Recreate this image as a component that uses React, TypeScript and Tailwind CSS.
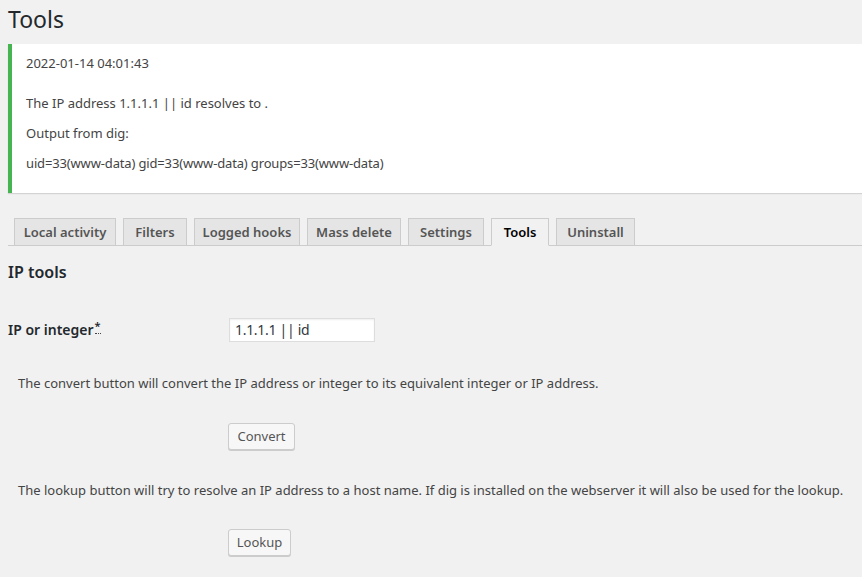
import React from "react";

const tabs: { label: string; w: string; active?: boolean }[] = [
  { label: "Local activity", w: "w-[102px]" },
  { label: "Filters", w: "w-[64px]" },
  { label: "Logged hooks", w: "w-[106px]" },
  { label: "Mass delete", w: "w-[94px]" },
  { label: "Settings", w: "w-[76px]" },
  { label: "Tools", w: "w-[58px]", active: true },
  { label: "Uninstall", w: "w-[79px]" },
];

export default function App() {
  return (
    <div
      className="min-h-[577px] bg-[#f1f1f1] text-[#444] text-[13px]"
      style={{ fontFamily: '"Noto Sans", "Open Sans", sans-serif' }}
    >
      <h1 className="h-[44px] pl-[8px] pt-[5px] text-[23px] leading-[29px] font-normal text-[#23282d]">
        Tools
      </h1>

      <div className="ml-[8px] bg-white border-l-4 border-[#46b450] pl-[14px] pt-[9px] pb-[20px] shadow-[0_1px_1px_rgba(0,0,0,0.12)]">
        <p className="leading-[20px]">2022-01-14 04:01:43</p>
        <p className="leading-[20px] mt-[20px]">The IP address 1.1.1.1 || id resolves to .</p>
        <p className="leading-[20px] mt-[10px]">Output from dig:</p>
        <p className="leading-[20px] mt-[10px] tracking-[-0.15px]">uid=33(www-data) gid=33(www-data) groups=33(www-data)</p>
      </div>

      <nav className="mt-[25px] ml-[8px] border-b border-[#ccc] flex pl-[6px] gap-[7px]">
        {tabs.map((t) => (
          <div
            key={t.label}
            className={`${t.w} h-[28px] -mb-px border border-[#ccc] text-center text-[13px] font-semibold leading-[26px] ${
              t.active
                ? "bg-[#f1f1f1] border-b-[#f1f1f1] text-black"
                : "bg-[#e5e5e5] text-[#555]"
            }`}
          >
            {t.label}
          </div>
        ))}
      </nav>

      <h2 className="pl-[8px] mt-[14px] text-[16px] leading-[24px] font-semibold text-[#23282d]">
        IP tools
      </h2>

      <div className="flex items-center mt-[34px] pl-[8px]">
        <div className="w-[221px] text-[14px] font-semibold text-[#23282d] leading-[20px]">
          IP or integer
          <sup className="text-[11px] ml-[1px] border-b border-dotted border-[#444]">*</sup>
        </div>
        <div className="w-[146px] h-[24px] bg-white border border-[#ddd] shadow-[inset_0_1px_2px_rgba(0,0,0,0.07)] text-[14px] text-[#32373c] pl-[5px] leading-[22px] tracking-[-0.3px]">
          1.1.1.1 || id
        </div>
      </div>

      <p className="pl-[18px] mt-[31px] text-[13px] leading-[20px]">
        The convert button will convert the IP address or integer to its equivalent integer or IP address.
      </p>
      <div className="pl-[228px] mt-[30px]">
        <button className="w-[67px] h-[27px] bg-[#f7f7f7] border border-[#ccc] rounded-[3px] shadow-[0_1px_0_#ccc] text-[13px] text-[#555] leading-[25px]">
          Convert
        </button>
      </div>

      <p className="pl-[18px] mt-[30px] text-[13px] leading-[20px]">
        The lookup button will try to resolve an IP address to a host name. If dig is installed on the webserver it will also be used for the lookup.
      </p>
      <div className="pl-[228px] mt-[29px]">
        <button className="w-[63px] h-[27px] bg-[#f7f7f7] border border-[#ccc] rounded-[3px] shadow-[0_1px_0_#ccc] text-[13px] text-[#555] leading-[25px]">
          Lookup
        </button>
      </div>
    </div>
  );
}
